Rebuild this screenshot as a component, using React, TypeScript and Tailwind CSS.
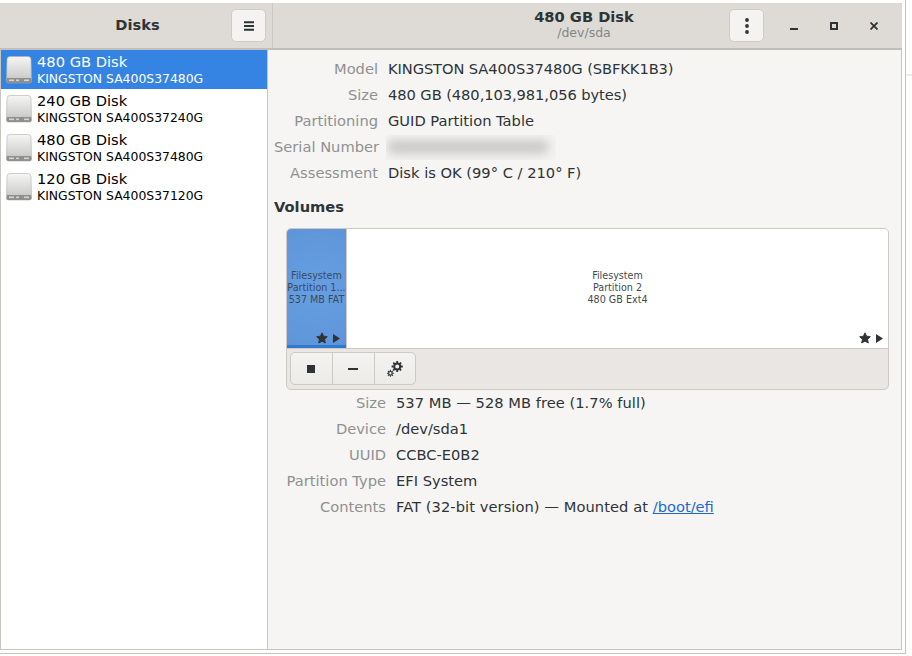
const disks = [
  ["480 GB Disk", "KINGSTON SA400S37480G"],
  ["240 GB Disk", "KINGSTON SA400S37240G"],
  ["480 GB Disk", "KINGSTON SA400S37480G"],
  ["120 GB Disk", "KINGSTON SA400S37120G"],
];

function DiskIcon({ id }: { id: number }) {
  return (
    <svg width="26" height="28" viewBox="0 0 26 28" className="shrink-0">
      <defs>
        <linearGradient id={`dg${id}`} x1="0" y1="0" x2="0" y2="1">
          <stop offset="0" stopColor="#f6f6f5" />
          <stop offset="0.7" stopColor="#d2d2d0" />
          <stop offset="1" stopColor="#bdbdbb" />
        </linearGradient>
      </defs>
      <path d="M4 .5h18a3 3 0 0 1 3 3L25.5 25a2 2 0 0 1-2 2h-21a2 2 0 0 1-2-2L1 3.5a3 3 0 0 1 3-3z" fill={`url(#dg${id})`} stroke="#b0b0ae" strokeWidth="0.6" />
      <path d="M1 22h24l.5 3a2 2 0 0 1-2 2h-21a2 2 0 0 1-2-2z" fill="#8f8f8d" />
      <rect x="3" y="23.5" width="5" height="1.6" fill="#d4d4d2" />
      <rect x="10" y="23.5" width="3" height="1.6" fill="#d4d4d2" />
      <rect x="18" y="23.5" width="5" height="1.6" fill="#d4d4d2" />
    </svg>
  );
}

function Row({ label, value, labelW, valueClass = "" }: { label: string; value: React.ReactNode; labelW: string; valueClass?: string }) {
  return (
    <div className="flex h-[26px] items-center gap-[10px]">
      <div className={`${labelW} text-right text-[#8f9190] whitespace-nowrap`}>{label}</div>
      <div className={`text-[#2e3436] whitespace-nowrap ${valueClass}`}>{value}</div>
    </div>
  );
}

function Star() {
  return (
    <svg width="12" height="12" viewBox="0 0 12 12">
      <path d="M6 .8l1.6 3.4 3.7.5-2.7 2.6.7 3.7L6 9.2 2.7 11l.7-3.7L.7 4.7l3.7-.5z" fill="#2e3436" stroke="#2e3436" strokeWidth="0.9" strokeLinejoin="round" />
    </svg>
  );
}

function Play() {
  return (
    <svg width="7" height="9" viewBox="0 0 7 9">
      <path d="M0 0L7 4.5 0 9z" fill="#2e3436" />
    </svg>
  );
}

function Gears() {
  const gear = (cx: number, cy: number, r: number, tooth: number, hole: number, sw: number) => (
    <g>
      <circle cx={cx} cy={cy} r={(r + hole) / 2} fill="none" stroke="#2e3436" strokeWidth={r - hole} />
      {[0, 45, 90, 135].map((a) => {
        const c = Math.cos((a * Math.PI) / 180);
        const s = Math.sin((a * Math.PI) / 180);
        return (
          <line
            key={a}
            x1={cx + tooth * c}
            y1={cy + tooth * s}
            x2={cx - tooth * c}
            y2={cy - tooth * s}
            stroke="#2e3436"
            strokeWidth={sw}
            strokeDasharray={`${tooth - r + 0.4} ${2 * r - 0.8} ${tooth - r + 0.4}`}
          />
        );
      })}
    </g>
  );
  return (
    <svg width="16" height="16" viewBox="0 0 16 16">
      {gear(10.2, 5.5, 4, 5.6, 2, 1.8)}
      {gear(3.4, 12.3, 2.4, 3.5, 1.2, 1.1)}
    </svg>
  );
}

export default function App() {
  return (
    <div className="h-[656px] w-[912px] bg-white font-['DejaVu_Sans',sans-serif] text-[14.67px] overflow-hidden relative">
      <div className="absolute left-[906px] top-[74px] h-[2px] w-[6px] bg-[#eeeeee]" />
      <div className="h-[654px] w-[906px] border-r border-b border-[#c8c5c0] pt-[3px]">
        <div className="flex h-[647px] w-[902px] flex-col border-b border-l border-r border-[#c9c5bf] bg-[#f6f5f4]">
          {/* Header */}
          <div className="-mx-px flex h-[47px] shrink-0 border-b-2 border-[#c2bfba] bg-[#dedbd6]">
            <div className="flex w-[273px] shrink-0 items-center border-r border-[#cbc8c2] pl-[62px]">
              <div className="w-[151px] text-center text-[14.67px] font-bold text-[#2e3436] -mt-[2px]">Disks</div>
              <button className="flex h-[33px] w-[35px] items-center justify-center rounded-[5px] border border-[#cfccc7] bg-[#f4f3f1] ml-[18px]">
                <svg width="12" height="12" viewBox="0 0 12 12">
                  <path d="M1 1.2h10v2H1zM1 5h10v2H1zM1 8.8h10v2H1z" fill="#2e3436" />
                </svg>
              </button>
            </div>
            <div className="flex min-w-0 flex-1 items-center">
              <div className="ml-[166px] w-[290px] shrink-0 -mt-[1px] text-center leading-[16px]">
                <div className="text-[14.67px] font-bold text-[#2e3436]">480 GB Disk</div>
                <div className="text-[12.5px] text-[#82878a]">/dev/sda</div>
              </div>
              <button className="flex h-[33px] w-[35px] shrink-0 items-center justify-center rounded-[5px] border border-[#cfccc7] bg-[#f4f3f1]">
                <svg width="6" height="16" viewBox="0 0 6 16">
                  <circle cx="3" cy="2" r="1.9" fill="#2e3436" />
                  <circle cx="3" cy="8" r="1.9" fill="#2e3436" />
                  <circle cx="3" cy="14" r="1.9" fill="#2e3436" />
                </svg>
              </button>
              <div className="ml-[26px] flex items-center gap-[32px]">
                <svg width="8" height="8" viewBox="0 0 8 8"><rect x="0" y="6" width="8" height="2" fill="#2e3436" /></svg>
                <svg width="8" height="8" viewBox="0 0 8 8"><path d="M0 0h8v8H0zM2 2v4h4V2z" fill="#2e3436" fillRule="evenodd" /></svg>
                <svg width="8" height="8" viewBox="0 0 8 8"><path d="M.5 .5l7 7M7.5 .5l-7 7" stroke="#2e3436" strokeWidth="1.8" /></svg>
              </div>
            </div>
          </div>

          <div className="flex min-h-0 flex-1">
            {/* Sidebar */}
            <div className="w-[267px] shrink-0 border-r border-[#c9c5bf] bg-white">
              {disks.map(([a, b], i) => (
                <div key={i} className={`flex h-[39px] items-center gap-[5px] pl-[5px] ${i === 0 ? "bg-[#3584e4] text-white" : "text-black"}`}>
                  <DiskIcon id={i} />
                  <div className="min-w-0 pt-[1px]">
                    <div className="text-[14.67px] leading-[18px]">{a}</div>
                    <div className="text-[12.4px] leading-[16px]">{b}</div>
                  </div>
                </div>
              ))}
            </div>

            {/* Main */}
            <div className="min-w-0 flex-1 pl-[6px] pt-[6px]">
              <Row labelW="w-[104px]" label="Model" valueClass="tracking-[-0.09px]" value="KINGSTON SA400S37480G (SBFKK1B3)" />
              <Row labelW="w-[104px]" label="Size" valueClass="tracking-[-0.07px]" value="480 GB (480,103,981,056 bytes)" />
              <Row labelW="w-[104px]" label="Partitioning" value="GUID Partition Table" />
              <Row labelW="w-[104px]" label="Serial Number" value={
                <div className="h-[25px] w-[170px] -ml-[2px] bg-[#f3f2f1] overflow-hidden">
                  <div className="mt-[5px] ml-[1px] h-[14px] w-[162px] rounded-[8px] bg-[#cbcac9] blur-[5px]" />
                </div>
              } />
              <Row labelW="w-[104px]" label="Assessment" value="Disk is OK (99° C / 210° F)" />
              <div className="mt-[12px] text-[14.67px] leading-[18px] font-bold text-[#2e3436]">Volumes</div>

              <div className="ml-[12px] mt-[12px] w-[603px] rounded-[5px] border border-[#cdc9c3] bg-[#e9e6e3] overflow-hidden">
                <div className="flex h-[120px] border-b border-[#cdc9c3] bg-white">
                  <div className="relative flex w-[59px] shrink-0 flex-col items-center border-b-[3px] border-b-[#3179d0] bg-[radial-gradient(circle,#669fe4,#5f95d8)]">
                    <div className="mt-[41px] whitespace-nowrap text-center text-[9.6px] leading-[12px] text-[#3a4a5e]">
                      <div>Filesystem</div>
                      <div>Partition 1...</div>
                      <div>537 MB FAT</div>
                    </div>
                    <div className="absolute bottom-[1px] right-[6px] flex items-center gap-[5px]"><Star /><Play /></div>
                  </div>
                  <div className="relative flex flex-1 flex-col items-center border-l border-[#cdc9c3]">
                    <div className="mt-[41px] text-center text-[9.6px] leading-[12px] text-[#454b4d]">
                      <div>Filesystem</div>
                      <div>Partition 2</div>
                      <div>480 GB Ext4</div>
                    </div>
                    <div className="absolute bottom-[4px] right-[5px] flex items-center gap-[5px]"><Star /><Play /></div>
                  </div>
                </div>
                <div className="flex h-[40px] items-center pl-[3px] pb-[1px]">
                  <div className="flex h-[33px] rounded-[5px] border border-[#cdc9c3] bg-gradient-to-b from-[#f4f3f1] to-[#ecebe8]">
                    <div className="flex w-[42px] items-center justify-center border-r border-[#cdc9c3] pr-[2px]">
                      <div className="h-[8px] w-[8px] bg-[#2e3436]" />
                    </div>
                    <div className="flex w-[42px] items-center justify-center border-r border-[#cdc9c3] pr-[2px]">
                      <div className="h-[2px] w-[10px] bg-[#2e3436]" />
                    </div>
                    <div className="flex w-[40px] items-center justify-center"><Gears /></div>
                  </div>
                </div>
              </div>

              <div className="mt-0">
                <Row labelW="w-[112px]" label="Size" valueClass="tracking-[0.03px]" value="537 MB — 528 MB free (1.7% full)" />
                <Row labelW="w-[112px]" label="Device" value="/dev/sda1" />
                <Row labelW="w-[112px]" label="UUID" value="CCBC-E0B2" />
                <Row labelW="w-[112px]" label="Partition Type" value="EFI System" />
                <Row labelW="w-[112px]" label="Contents" value={<span><span className="tracking-[0.06px]">FAT (32-bit version) — Mounted at </span><span className="text-[#1b6acb] underline">/boot/efi</span></span>} />
              </div>
            </div>
          </div>
        </div>
      </div>
    </div>
  );
}
